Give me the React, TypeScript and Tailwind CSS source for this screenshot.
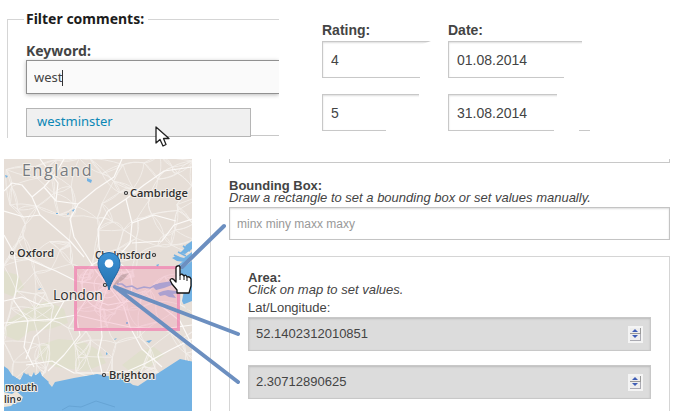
import React, { useState } from "react";

type Point = [number, number];

const towns: Point[] = [];

function makeRandom(seed: number) {
  let state = seed;
  return () => {
    state = (state * 1664525 + 1013904223) % 4294967296;
    return state / 4294967296;
  };
}

function buildRoads() {
  const random = makeRandom(29);
  for (let row = 0; row < 13; row++) {
    for (let col = 0; col < 10; col++) {
      towns.push([col * 21 - 2 + random() * 17, row * 18 - 4 + random() * 16]);
    }
  }
  for (let i = 0; i < 34; i++) {
    const angle = random() * Math.PI * 2;
    const radius = 6 + random() * 30;
    towns.push([104 + Math.cos(angle) * radius, 128 + Math.sin(angle) * radius]);
  }
  const roads: string[] = [];
  towns.forEach((a, i) => {
    towns
      .map((b, j) => ({ b, j, d: Math.hypot(a[0] - b[0], a[1] - b[1]) }))
      .filter((n) => n.j !== i)
      .sort((m, n) => m.d - n.d)
      .slice(0, 4)
      .forEach(({ b }) => {
        const cx = (a[0] + b[0]) / 2 + (random() - 0.5) * 9;
        const cy = (a[1] + b[1]) / 2 + (random() - 0.5) * 9;
        roads.push(`M${a[0].toFixed(1)} ${a[1].toFixed(1)}Q${cx.toFixed(1)} ${cy.toFixed(1)} ${b[0].toFixed(1)} ${b[1].toFixed(1)}`);
      });
  });
  return roads.join("");
}

const minorRoads = buildRoads();

const mainRoads =
  "M0 32L8 24L18 26L28 38L40 28L52 14L60 0M40 28L52 42L74 45L92 30L110 18L118 0M74 45L66 60L70 78L82 96L92 112L104 126" +
  "M28 38L36 56L50 68L66 82L80 98M104 126L95 88L94 70L104 52L122 40L140 26L160 12L188 8M104 126L112 100L126 84L128 64L122 40" +
  "M128 84L158 82L170 66L188 60M128 64L150 56L172 62M0 76L10 94L28 102L52 112L72 122L104 126M10 94L14 118L10 142L24 162L20 188L30 208" +
  "M104 126L84 138L60 142L36 146L18 138L0 142M60 142L50 160L30 178L22 200M84 138L72 156L76 176L60 196L44 212" +
  "M104 126L96 150L98 178L94 196L98 214M104 126L120 148L126 168L138 190L158 208M104 126L132 134L156 146L176 162L188 186M84 138L104 146L126 142" +
  "M22 206L48 202L70 214L98 214L124 212L142 204L168 190L188 180M0 52L20 58L36 56M52 42L54 24L36 0M0 164L24 162L50 160L72 156L98 162L126 168L158 170L188 166";

const coast =
  "M-2 -2H190V94L186 100L180 106L176 112L177 124L180 132L178 142L182 150L190 152V203L176 200L159 211L143 221L134 227L129 226L119 219L103 217L93 215L70 219L51 223L48 228L41 220L35 214L28 218L20 214L16 221L8 216L4 210L-2 206Z";

const labelProps = {
  fontFamily: '"Open Sans", "Noto Sans", sans-serif',
  fontWeight: 600,
  fill: "#303030",
  stroke: "#f3eee9",
  strokeWidth: 2,
  strokeLinejoin: "round" as const,
  paintOrder: "stroke",
};

function MapView() {
  return (
    <svg viewBox="0 0 188 252" className="block h-[252px] w-[188px] shrink-0" aria-label="Map of south-east England">
      <defs>
        <clipPath id="land">
          <path d={coast} />
        </clipPath>
        <linearGradient id="pin" x1="0" y1="0" x2="0" y2="1">
          <stop offset="0" stopColor="#3c93d6" />
          <stop offset="1" stopColor="#2370ad" />
        </linearGradient>
      </defs>
      <rect width="188" height="252" fill="#73b2e3" />
      <path d={coast} fill="#e6ded7" />
      <path d="M176 98l12-8v12l-8 6-5 2zM178 146l10-4v12h-10z" fill="#e6ded7" />
      <g clipPath="url(#land)">
        <g fill="#e0dfcd">
          <path d="M0 112l14 4 6 12-10 10-10-4zM20 150l24-8 16 8 4 14-18 6-20 2-12 10-14-6 4-14zM36 186l18-6 24 2 18 10 6 12-20 8-30-4-18-8zM118 206l18-14 14-4 10 8-14 12-18 6z" />
        </g>
        <path d={minorRoads} fill="none" stroke="#f4f0ec" strokeWidth=".8" />
        <path d={mainRoads} fill="none" stroke="#fcfaf8" strokeWidth="1.2" strokeLinejoin="round" />
        <circle cx="103" cy="126" r="13" fill="none" stroke="#f8f4f0" />
        <circle cx="103" cy="126" r="25" fill="none" stroke="#fcfaf8" strokeWidth="1.2" />
      </g>
      <g fill="#73b2e3">
        <path d="M83 19l5 2-1 3-4-2zM1 16l3 1-2 2zM68 51l3-1-2 3zM63 55l2-1-1 2zM52 54h2v1h-2zM152 106l3-1-1 3zM142 182l6-1-3 3zM102 193l2 2-2 1zM110 180l3-1-2 2zM122 163h2v2h-2zM34 130l4-1-3 2z" />
        <path d="M17 222l3-9 2 7 2-6 2 7 4-8 2 6 4-7 2 5 7 6-3 3-10 2z" />
        <path d="M188 82l-6 4-2 4-4 4 5 1 7-5zM188 93l-8 6-8-2-4 2 5 3 8 1 7-5z" />
      </g>
      <g fill="none" stroke="#73b2e3" strokeLinejoin="round">
        <path d="M190 97l-9 5-8 6M182 97l-8-4M186 92l-7-5M176 99l-6-3" strokeWidth="1.6" />
      </g>
      <path d="M113 125l5 0 4 3 6-1 5 3 7-2 6 1 6-3 5-1" fill="none" stroke="#83a5de" strokeWidth="1.6" />
      <path d="M148 127l8-3 12-2 8 0v4l-8 0-8 3-8 2zM154 134l5-2 5-1 8 1 4-1v3l-7 1 3 4-7-1-4-2-5 1z" fill="#83a5de" />
      <path d="M0 233l8 2 4-3 7 6-2 5-7 1-3 3-7 1z" fill="#eee5d9" />
      <path d="M58 251l7-4 12 1 15-6 19 6" fill="none" stroke="#609ece" strokeWidth=".7" />
      <rect x="71.5" y="108.5" width="103" height="62" fill="#f39ab8" fillOpacity=".36" stroke="#f084b2" strokeOpacity=".75" strokeWidth="3" />
      <g {...labelProps}>
        <text x="18" y="17" fontSize="16" fontWeight="400" fill="#777b80" className="tracking-widest">England</text>
        <text x="126" y="38" fontSize="11">Cambridge</text>
        <text x="13" y="98" fontSize="11">Oxford</text>
        <text x="91" y="100" fontSize="10">Chelmsford</text>
        <text x="49" y="141" fontSize="14" fontWeight="500">London</text>
        <text x="105" y="220" fontSize="11">Brighton</text>
        <text x="1" y="232" fontSize="10">mouth</text>
        <text x="0" y="244" fontSize="10">lin</text>
      </g>
      <g fill="#fff" stroke="#333" strokeWidth="1.2">
        <circle cx="122" cy="34" r="1.5" />
        <circle cx="8" cy="94" r="1.5" />
        <circle cx="150" cy="96" r="1.5" />
        <circle cx="101" cy="126" r="1.5" />
        <circle cx="100" cy="216" r="1.5" />
        <circle cx="15" cy="240" r="1.5" />
      </g>
      <path d="M107 129l10-13 8-2-5 6z" fill="#000" opacity=".15" />
      <path d="M105 131C103 121 94 113 94 104.500A11 11 0 0 1 116 104.500C116 113 107 121 105 131Z" fill="url(#pin)" stroke="#2067a2" />
      <circle cx="105" cy="104.500" r="4.300" fill="#fff" />
    </svg>
  );
}

function Annotations() {
  return (
    <svg viewBox="0 0 240 252" className="pointer-events-none absolute top-0 left-0 h-[252px] w-[240px]" aria-hidden="true">
      <g stroke="#6c8fc0" strokeWidth="4" strokeLinecap="round">
        <path d="M224 67L182 108M115 128L238 175M115 128L238 223" />
      </g>
      <path
        d="M178 107Q180 106 180 109V116Q182 114 184 117Q186 115 187 118Q190 117 191 120V127L189 134H177V131L172 125L170 121Q172 118 175 122L176 123V109Q176 107 178 107Z"
        fill="#fff"
        stroke="#151515"
        strokeWidth="1.3"
        strokeLinejoin="round"
      />
      <path d="M180 116v5M184 117v4M187 118v4" stroke="#151515" />
    </svg>
  );
}

function Coordinate({ id, label, initial }: { id: string; label: string; initial: string }) {
  const [value, setValue] = useState(initial);
  const step = (by: number) => setValue(String(Number(value) + by));
  return (
    <div className="flex h-[34px] items-center border border-[#c8c8c8] bg-[#dcdcdc] pr-[7px] pl-[7px] shadow-[inset_0_1px_2px_#bbb]">
      <input
        id={id}
        aria-label={label}
        inputMode="decimal"
        value={value}
        onChange={(e) => setValue(e.target.value)}
        className="min-w-0 flex-1 bg-transparent text-[13px] text-[#444] outline-none"
      />
      <span className="flex h-[17px] w-[15px] flex-col border-2 border-[#f4f4f4] bg-[#a9a9b0]">
        <button type="button" aria-label={`Increase ${label}`} onClick={() => step(1)} className="flex flex-1 items-center justify-center border-r border-b border-[#999] bg-[#eee]">
          <svg viewBox="0 0 6 3" className="h-[3px] w-[6px]"><path d="M0 3L3 0L6 3Z" fill="#3e5db5" /></svg>
        </button>
        <button type="button" aria-label={`Decrease ${label}`} onClick={() => step(-1)} className="flex flex-1 items-center justify-center border-r border-b border-[#aaaab2] bg-[#eee]">
          <svg viewBox="0 0 6 3" className="h-[3px] w-[6px]"><path d="M0 0L3 3L6 0Z" fill="#3e5db5" /></svg>
        </button>
      </span>
    </div>
  );
}

const field = "block h-[37px] w-full border border-[#c8c8c8] bg-white px-2 text-[14px] text-[#444] shadow-[inset_0_1px_2px_#ddd] outline-none";

export default function App() {
  const [keyword, setKeyword] = useState("west");
  return (
    <main className="bg-white font-['Liberation_Sans',Arial,sans-serif] text-[#444]">
      <section className="flex h-[159px] items-start pt-2 pr-[84px] pl-[7px]">
        <fieldset className="h-[130px] min-w-0 flex-1 border-t border-l border-[#d5d5d5] pl-[18px] font-['Noto_Sans','Open_Sans',sans-serif]">
          <legend className="-ml-0.5 pr-1 pl-0.5 text-[14px] leading-[22px] font-bold text-[#1c1c1c]">Filter comments:</legend>
          <label htmlFor="keyword" className="mt-3 block text-[14px] leading-[18px] font-bold">Keyword:</label>
          <div className="relative">
            <input
              id="keyword"
              value={keyword}
              onChange={(e) => setKeyword(e.target.value)}
              className="block h-[34px] w-full border border-r-0 border-[#909090] bg-[#fafafa] px-[7px] text-[13px] shadow-[0_1px_4px_#bbb] outline-none [clip-path:inset(-5px_0_-5px_-5px)]"
            />
            <span className="absolute top-2.5 left-9 h-4 w-px bg-[#333]" />
          </div>
          <div className="relative mt-3.5 border-l border-[#c8c8c8]">
            <ul className="mr-7 -ml-px">
              <li>
                <button type="button" onClick={() => setKeyword("westminster")} className="block h-[29px] w-full border border-[#b5b5b5] bg-[#f0f0f0] px-2.5 pb-0.5 text-left text-[13px] text-[#0b87b5]">
                  westminster
                </button>
              </li>
            </ul>
            <div className="-mt-0.5 ml-[224px] h-0.5 border-t border-[#c8c8c8]" />
            <svg viewBox="0 0 15 21" className="absolute top-[18px] left-[128px] h-[21px] w-[15px]" aria-hidden="true">
              <path d="M1 1V17L5 13.500L8 20L11 18.500L8.500 12.500H14Z" fill="#fff" stroke="#222" strokeWidth="1.3" strokeLinejoin="round" />
            </svg>
          </div>
        </fieldset>
        <div className="ml-[43px] w-[109px] pt-3.5 text-[14px]">
          <label htmlFor="rating" className="block h-[19px] leading-4 font-bold">Rating:</label>
          <input id="rating" defaultValue="4" className={`${field} [clip-path:polygon(0_0,100%_0,98px_4px,98px_100%,0_100%)]`} />
          <input aria-label="Highest rating" defaultValue="5" className={`${field} mt-4 [clip-path:polygon(0_0,97px_0,97px_4px,64px_4px,64px_100%,0_100%)]`} />
        </div>
        <div className="ml-[17px] w-[143px] pt-3.5 text-[14px]">
          <label htmlFor="date" className="block h-[19px] leading-4 font-bold">Date:</label>
          <input id="date" defaultValue="01.08.2014" className={`${field} [clip-path:polygon(0_0,134px_0,134px_3px,116px_6px,116px_100%,0_100%)]`} />
          <input aria-label="Latest date" defaultValue="31.08.2014" className={`${field} mt-4 [clip-path:polygon(0_0,109px_0,109px_4px,106px_6px,106px_37px,131px_37px,131px_36px,142px_36px,142px_37px,0_37px)]`} />
        </div>
      </section>

      <section className="relative flex pr-[5px] pl-1">
        <MapView />
        <form className="ml-[18px] flex h-[252px] min-w-0 flex-1 flex-col border-l border-[#d5d5d5] pl-[18px] text-[13px]">
          <div className="h-1 shrink-0 border border-t-0 border-[#c8c8c8]" />
          <label htmlFor="bbox" className="mt-[17px] leading-3 font-bold">Bounding Box:</label>
          <p className="leading-3 italic">Draw a rectangle to set a bounding box or set values manually.</p>
          <input
            id="bbox"
            placeholder="minx miny maxx maxy"
            className="mt-[3px] block h-[33px] w-full shrink-0 border border-[#c4c4c4] px-[7px] text-[12px] shadow-[inset_0_1px_2px_#ddd] outline-none placeholder:text-[#999]"
          />
          <div role="group" aria-labelledby="area" className="mt-4 flex-1 border border-b-0 border-[#d5d5d5] px-[18px] pt-[15px]">
            <h2 id="area" className="leading-3 font-bold">Area:</h2>
            <p className="leading-3 italic">Click on map to set values.</p>
            <label htmlFor="latitude" className="mt-1 mb-px block leading-4">Lat/Longitude:</label>
            <Coordinate id="latitude" label="Latitude" initial="52.1402312010851" />
            <div className="mt-3.5">
              <Coordinate id="longitude" label="Longitude" initial="2.30712890625" />
            </div>
          </div>
        </form>
        <Annotations />
      </section>
    </main>
  );
}
